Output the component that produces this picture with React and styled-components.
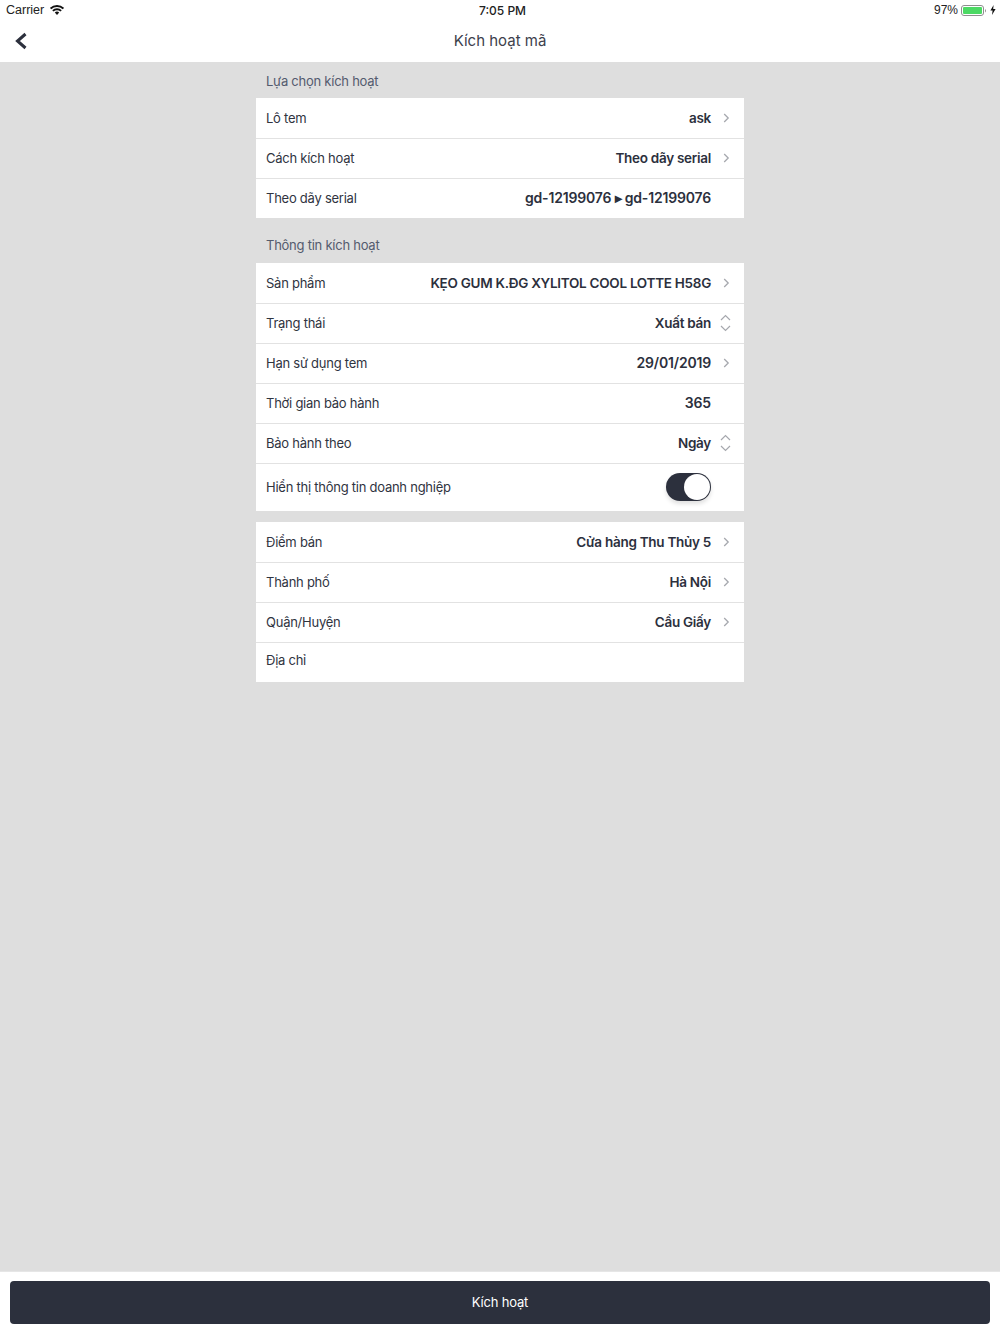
import React from "react";
import styled, { createGlobalStyle } from "styled-components";

const Global = createGlobalStyle`
  html, body { margin: 0; padding: 0; }
  body { font-family: Inter, "Noto Sans", sans-serif; background: #dedede; color: #2c303d; }
`;
const Page = styled.div`
  width: 1000px; height: 1334px; display: flex; flex-direction: column; background: #dedede; overflow: hidden;
`;
const Top = styled.header`
  background: #fff; height: 62px; flex: none; display: flex; flex-direction: column;
`;
const StatusBar = styled.div`
  height: 20px; display: grid; grid-template-columns: 1fr auto 1fr; align-items: center; padding: 0 4px 0 6px;
  font-family: "Liberation Sans", Arial, sans-serif; font-size: 12.5px; color: #222;
`;
const StatusLeft = styled.div`display: flex; align-items: center; gap: 6px;`;
const StatusRight = styled.div`display: flex; align-items: center; justify-content: flex-end; gap: 3px; font-size: 12px;`;
const Time = styled.div`font-weight: 500; font-family: Inter, sans-serif; font-size: 12px; padding-left: 3px;`;
const NavBar = styled.div`
  flex: 1; position: relative; display: flex; align-items: center; justify-content: center; font-size: 15px; color: #3d414c; padding-bottom: 1px;
`;
const Back = styled.svg`position: absolute; left: 14px; top: 11px;`;
const Content = styled.main`
  flex: 1; width: 488px; margin: 0 auto; display: flex; flex-direction: column;
`;
const SectionTitle = styled.div`
  height: ${p => p.$h || 36}px; box-sizing: border-box; padding: ${p => p.$pt || 1}px 10px 0; display: flex; align-items: center;
  font-size: 13px; color: #545b6e; letter-spacing: -0.25px;
`;
const Group = styled.section`background: #fff; margin-bottom: ${p => p.$mb || 0}px;`;
const Row = styled.div`
  height: ${p => p.$h || 40}px; box-sizing: border-box; display: flex; align-items: center;
  padding: 0 13px ${p => p.$pb ?? 2}px 10px; border-top: 1px solid transparent;
  & + & { border-top-color: #e2e2e2; }
`;
const Label = styled.span`font-size: 13px; color: #30343f; flex: none; letter-spacing: -0.25px;`;
const Value = styled.span`
  flex: 1; text-align: right; font-size: ${p => (p.$num ? 14 : 13.5)}px; font-weight: 600; color: #2c303d; white-space: nowrap;
  letter-spacing: ${p => (p.$num ? "-0.18px" : "-0.28px")}; margin-right: -1px;
`;
const IconSlot = styled.span`width: 21px; flex: none; display: flex; justify-content: flex-end;`;
const Switch = styled.span`
  margin-left: auto; margin-right: 20px; width: 45px; height: 28px; border-radius: 14px; background: #2c303d; position: relative;
  box-shadow: 0 3px 4px rgba(0,0,0,.12);
`;
const Knob = styled.span`
  position: absolute; right: 1px; top: 1px; width: 26px; height: 26px; border-radius: 50%; background: #fff;
`;
const Footer = styled.footer`
  height: 63px; flex: none; box-sizing: border-box; background: #fff; padding: 9px 10px; border-top: 1px solid #e6e6e6;
`;
const Button = styled.button`
  width: 100%; height: 43px; border: 0; border-radius: 4px; background: #2c303d; color: #fff;
  font-family: Inter, sans-serif; font-size: 13px; letter-spacing: -0.18px; padding: 0 0 1px;
`;

const Chevron = () => (
  <svg width="7" height="10" viewBox="0 0 7 10" style={{ marginRight: 1 }}>
    <path d="M1.2 1 L5.2 5 L1.2 9" fill="none" stroke="#a6a8ae" strokeWidth="1.3" />
  </svg>
);
const Updown = () => (
  <svg width="11" height="18" viewBox="0 0 11 18">
    <path d="M1 6 L5.5 1.5 L10 6 M1 12 L5.5 16.5 L10 12" fill="none" stroke="#a6a8ae" strokeWidth="1.2" />
  </svg>
);

const Item = ({ label, value, icon, num, pb }) => (
  <Row $pb={pb}>
    <Label>{label}</Label>
    <Value $num={num}>{value}</Value>
    <IconSlot>{icon === "c" ? <Chevron /> : icon === "u" ? <Updown /> : null}</IconSlot>
  </Row>
);

export default function App() {
  return (
    <Page>
      <Global />
      <Top>
        <StatusBar>
          <StatusLeft>
            Carrier
            <svg width="14" height="10" viewBox="0 0 14 10">
              <path d="M0.6 3.6 A9.2 9.2 0 0 1 13.4 3.6" fill="none" stroke="#111" strokeWidth="1.9" />
              <path d="M2.9 5.9 A5.8 5.8 0 0 1 11.1 5.9" fill="none" stroke="#111" strokeWidth="1.9" />
              <path d="M4.8 7.5 A3.2 3.2 0 0 1 9.2 7.5 L7 10 Z" fill="#111" />
            </svg>
          </StatusLeft>
          <Time>7:05 PM</Time>
          <StatusRight>
            97%
            <svg width="26" height="11" viewBox="0 0 26 11">
              <rect x="0.5" y="0.5" width="22" height="10" rx="2.5" fill="none" stroke="#8e8e8e" />
              <rect x="2" y="2" width="19" height="7" rx="1" fill="#4cd964" />
              <path d="M24 4 a2 2 0 0 1 0 3.4 Z" fill="#8e8e8e" />
            </svg>
            <svg width="6" height="10" viewBox="0 0 6 10"><path d="M3.6 0 L0.4 5.6 H2.6 L2 10 L5.6 4 H3.2 Z" fill="#111" /></svg>
          </StatusRight>
        </StatusBar>
        <NavBar>
          <Back width="16" height="20" viewBox="0 0 16 20">
            <path d="M11.5 3 L3.5 10 L11.5 17" fill="none" stroke="#2c303d" strokeWidth="3" />
          </Back>
          Kích hoạt mã
        </NavBar>
      </Top>
      <Content>
        <SectionTitle>Lựa chọn kích hoạt</SectionTitle>
        <Group>
          <Item label="Lô tem" value="ask" icon="c" />
          <Item label="Cách kích hoạt" value="Theo dãy serial" icon="c" />
          <Item label="Theo dãy serial" value="gd-12199076 ▸ gd-12199076" num />
        </Group>
        <SectionTitle $h={45} $pt={9}>Thông tin kích hoạt</SectionTitle>
        <Group $mb={11}>
          <Item label="Sản phẩm" value="KẸO GUM K.ĐG XYLITOL COOL LOTTE H58G" icon="c" />
          <Item label="Trạng thái" value="Xuất bán" icon="u" />
          <Item label="Hạn sử dụng tem" value="29/01/2019" icon="c" num />
          <Item label="Thời gian bảo hành" value="365" num />
          <Item label="Bảo hành theo" value="Ngày" icon="u" />
          <Row $h={48} $pb={1}>
            <Label>Hiển thị thông tin doanh nghiệp</Label>
            <Switch><Knob /></Switch>
          </Row>
        </Group>
        <Group>
          <Item label="Điểm bán" value="Cửa hàng Thu Thủy 5" icon="c" />
          <Item label="Thành phố" value="Hà Nội" icon="c" />
          <Item label="Quận/Huyện" value="Cầu Giấy" icon="c" />
          <Item label="Địa chỉ" value="" pb={5} />
        </Group>
      </Content>
      <Footer><Button>Kích hoạt</Button></Footer>
    </Page>
  );
}
